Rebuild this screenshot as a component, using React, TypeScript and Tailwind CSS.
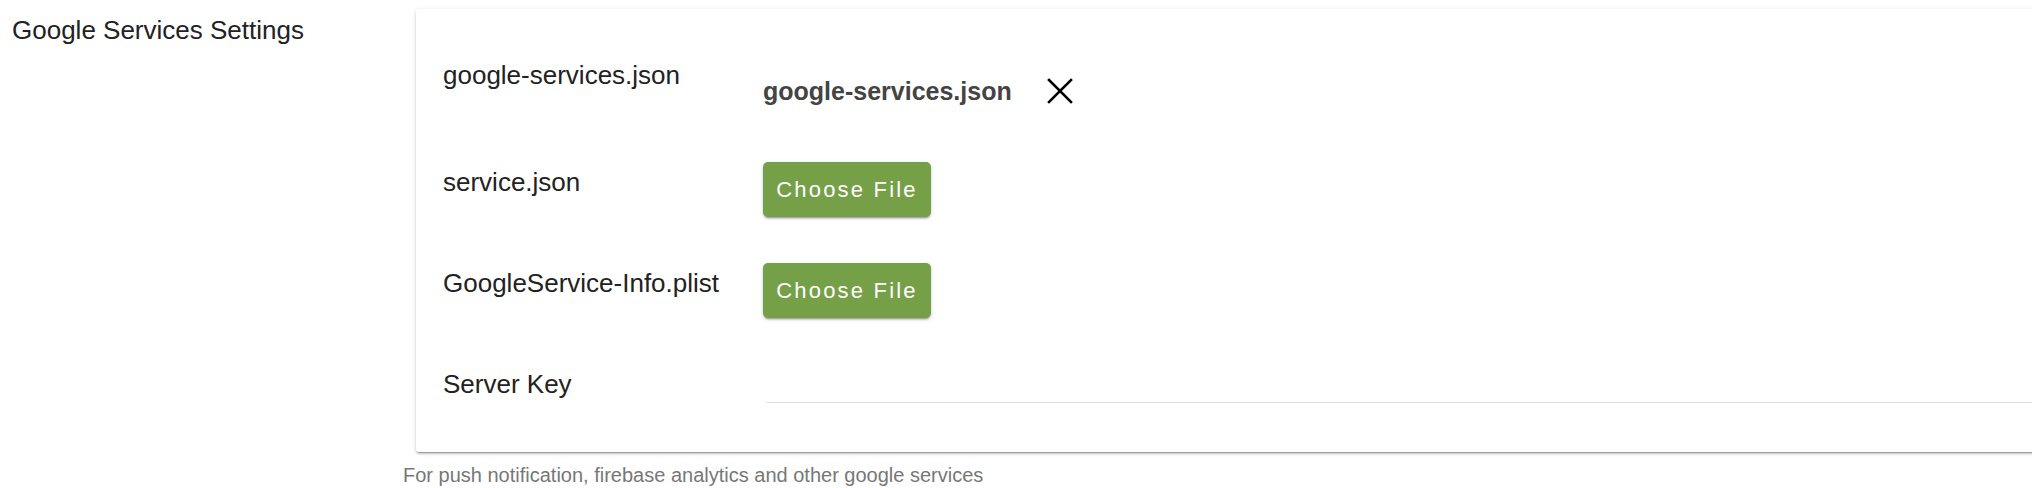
import React from 'react'

const font = { fontFamily: '"Liberation Sans", Arial, sans-serif' }

function ChooseFile() {
  return (
    <button className="h-[55px] w-[168px] rounded-[5px] bg-[#76a048] text-[22px] tracking-[0.1em] text-white shadow-[0_2px_2px_0_rgba(0,0,0,0.14),0_3px_1px_-2px_rgba(0,0,0,0.2),0_1px_5px_0_rgba(0,0,0,0.12)]">
      Choose File
    </button>
  )
}

function Row({ label, children, labelPt, valuePt }: { label: string; children?: React.ReactNode; labelPt: string; valuePt: string }) {
  return (
    <div className="flex h-[101px] items-start">
      <div className={`w-[320px] shrink-0 text-[26px] leading-[30px] text-[#222] ${labelPt}`}>{label}</div>
      <div className={`flex-1 ${valuePt}`}>{children}</div>
    </div>
  )
}

export default function App() {
  return (
    <div className="flex min-h-[488px] w-full overflow-hidden bg-white" style={font}>
      <div className="w-[403px] shrink-0 pl-3 pt-[15px] text-[26px] leading-[30px] text-[#222]">
        Google Services Settings
      </div>
      <div className="mr-[-24px] flex-1 pt-[9px]">
        <div className="ml-[13px] h-[443px] rounded-[3px] bg-white pl-[27px] pt-[41px] shadow-[0_2px_2px_0_rgba(0,0,0,0.16),0_3px_1px_-2px_rgba(0,0,0,0.22),0_1px_5px_0_rgba(0,0,0,0.12)]">
          <Row label="google-services.json" labelPt="pt-[10px]" valuePt="pt-[26px]">
            <div className="flex items-center">
              <span className="text-[25px] font-bold leading-[30px] text-[#444]">google-services.json</span>
              <svg className="ml-[35px]" width="26" height="26" viewBox="0 0 26 26" fill="none" stroke="#000" strokeWidth="2.6" strokeLinecap="square">
                <line x1="2" y1="2" x2="24" y2="24" />
                <line x1="24" y1="2" x2="2" y2="24" />
              </svg>
            </div>
          </Row>
          <Row label="service.json" labelPt="pt-[16px]" valuePt="pt-[11px]">
            <ChooseFile />
          </Row>
          <Row label="GoogleService-Info.plist" labelPt="pt-[16px]" valuePt="pt-[11px]">
            <ChooseFile />
          </Row>
          <div className="flex items-start">
            <div className="w-[320px] shrink-0 pt-[16px] text-[26px] leading-[30px] text-[#222]">Server Key</div>
            <div className="ml-[3px] h-[50px] flex-1 border-b border-[#e0e0e0]" />
          </div>
        </div>
        <div className="pt-[12px] text-[20px] leading-[22px] text-[#777]">
          For push notification, firebase analytics and other google services
        </div>
      </div>
    </div>
  )
}
